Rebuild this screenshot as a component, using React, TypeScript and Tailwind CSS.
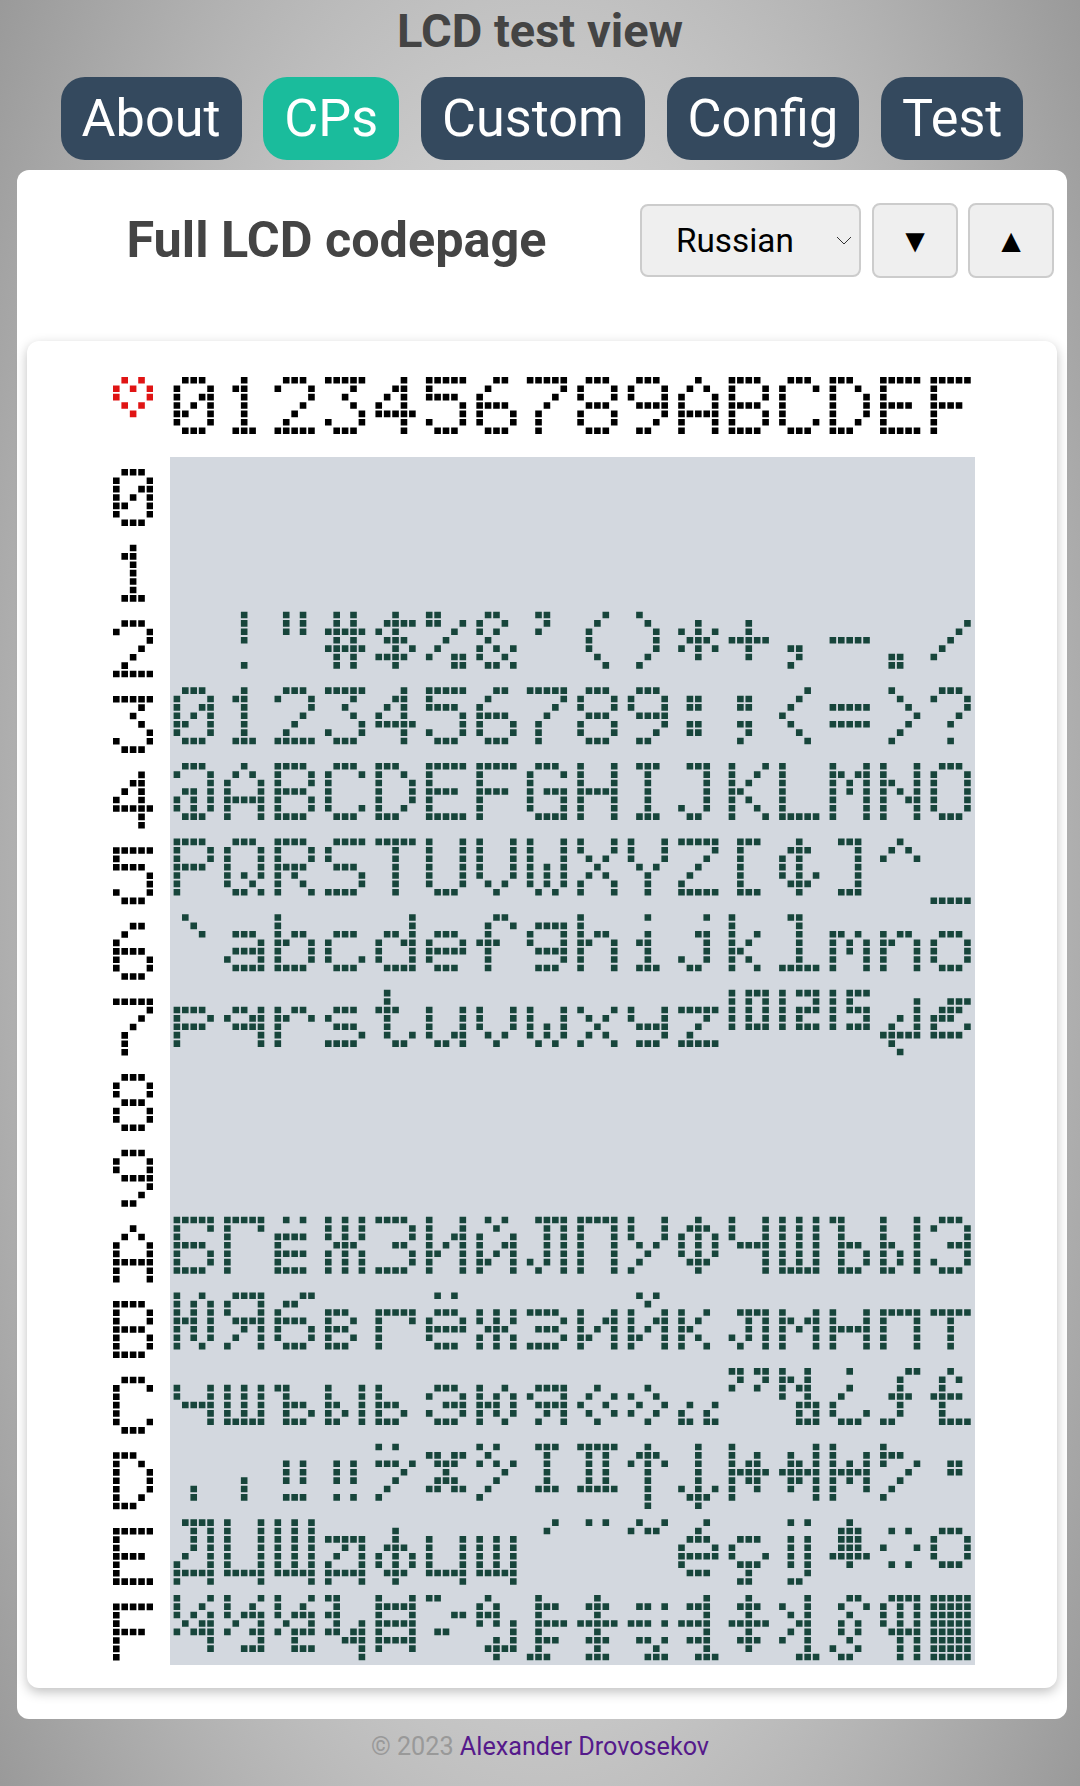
const PITCH = 8.41;
const ROW_PITCH = 8.404;
const DOT = 6.6;

// 5x8 character ROM, two hex digits per pixel row, rows left out are empty
const ROM: Record<number, string[]> = {
  0x2: ["", "04040404000004", "0a0a0a", "0a0a1f0a1f0a0a", "040f140e051e04", "18190204081303", "0c12140815120d", "0c0408", "02040808080402", "08040202020408", "0004150e150400", "0004041f040400", "000000000c0408", "0000001f", "00000000000c0c", "000102040810"],
  0x3: ["0e11131519110e", "040c040404040e", "0e11010204081f", "1f02040201110e", "02060a121f0202", "1f101e0101110e", "0608101e11110e", "1f010204080808", "0e11110e11110e", "0e11110f01020c", "000c0c000c0c", "000c0c000c0408", "02040810080402", "00001f001f", "08040201020408", "0e110102040004"],
  0x4: ["0e11010d15150e", "040a11111f1111", "1e11111e11111e", "0e11101010110e", "1c12111111121c", "1f10101e10101f", "1f10101e101010", "0e11101711110f", "1111111f111111", "0e04040404040e", "0e02020202120c", "11121418141211", "1010101010101f", "111b1515111111", "11111915131111", "0e11111111110e"],
  0x5: ["1e11111e101010", "0e11111115120d", "1e11111e141211", "0f10100e01011e", "1f040404040404", "1111111111110e", "11111111110a04", "1111111515150a", "11110a040a1111", "1111110a040404", "1f01020408101f", "0e08080808080e", "040e1414150e04", "0e02020202020e", "040a11", "000000000000001f"],
  0x6: ["08040200000000", "00000e010f110f", "1010161911111e", "00000e1010110e", "01010d1311110f", "00000e111f100e", "0609081c080808", "000f11110f010e", "10101619111111", "0400040c04040e", "0200060202120c", "10101214181412", "0c04040404041f", "00001a15151111", "00001619111111", "00000e1111110e"],
  0x7: ["00001e111e1010", "00000d130f0101", "00001619101010", "00000e100e011e", "08081c08080906", "0000111111130d", "00001111110a04", "0000111115150a", "0000110a040a11", "000011110f010e", "00001f0204081f", "1715151517", "1711171417", "1714171117", "00010105091f0804", "00070e1c111e"],
  0xa: ["1f11101e11111e", "1f111010101010", "0a001e101e101e", "1515150e151515", "1e01010601011e", "11111315191111", "0a041113151911", "0f050505051509", "1f111111111111", "1111110a040810", "040e1515150e04", "1111110f010101", "1515151515151f", "1808080e09090e", "11111119151519", "0e11010701110e"],
  0xb: ["1215151d151512", "0f11110f050911", "030c101e11110e", "00001c121c121c", "00001f11101010", "0a000e111f100e", "000015150e1515", "00001e010e011e", "00001113151911", "0a041113151911", "00001214181412", "00000f05051509", "0000111b151111", "000011111f1111", "00001f11111111", "00001f04040404"],
  0xc: ["000011110f0101", "0000151515151f", "000018080e090e", "00001111191519", "000010101c121c", "00000e1107110e", "000012151d1512", "00000f110f0509", "00000409120904", "00000412091204", "0000000009121b", "1b0912", "121a1612070507", "0400040810110e", "0304040e040418", "040a081e08080f"],
  0xd: ["00000000000404", "00000000040404", "00000a0a0a000e", "00000a0a0a000a", "14001d02040810", "001b0e040e1b", "14081502040810", "0e040404040e", "1f0a0a0a0a1f", "040e150404040404", "0404040404150e04", "1012161f161210", "01090d1f0d0901", "1011151f151110", "101c1102040810", "00000606"],
  0xe: ["0f05050509111f11", "1111111111111f01", "1515151515151f01", "00001f0509111f11", "0004040e15150e04", "0000111111111f01", "0000151515151f01", "0204", "0a", "0916", "02040e111f100e", "00000e10110e040c", "0a000a0a0a0a020c", "040e0e0e1f04", "000a0011000a", "000e1111110e"],
  0xf: ["1112150b170101", "11121709130107", "11121709170407", "180818091b070101", "111f111f111f11", "180003000c", "08141c1501050f04", "080e080f080e081c", "040e041f040e040e", "000d001d000d0207", "020e021e020e0207", "040e041f040e04", "02120a060a120207", "0609040a0a04120c", "0f1515150f050505", "1f1f1f1f1f1f1f1f"],
};

const LABELS = [0, 1, 2, 3, 4, 5, 6, 7, 8, 9, 0xa, 0xb, 0xc, 0xd, 0xe, 0xf];
const HEX_CODES = LABELS.map((n) => (n < 10 ? 0x30 + n : 0x41 + n - 10));
const HEART = [0x0a, 0x15, 0x11, 0x0a, 0x04];

function glyphRows(code: number) {
  const data = ROM[code >> 4]?.[code & 15] ?? "";
  return (data.match(/../g) ?? []).map((h) => parseInt(h, 16));
}

function dots(rows: number[], col: number, row: number, x0: number, y0: number) {
  const out: { x: number; y: number }[] = [];
  rows.forEach((bits, r) => {
    for (let c = 0; c < 5; c++) {
      if (bits & (16 >> c)) {
        out.push({ x: x0 + (col * 6 + c) * PITCH, y: y0 + (row * 9 + r) * ROW_PITCH });
      }
    }
  });
  return out;
}

function Dots({ list, color, w, h }: { list: { x: number; y: number }[]; color: string; w: number; h: number }) {
  return (
    <svg width={w} height={h} viewBox={`0 0 ${w} ${h}`} className="block shrink-0">
      <path fill={color} d={list.map((d) => `M${d.x.toFixed(2)} ${d.y.toFixed(2)}h${DOT}v${DOT}h-${DOT}z`).join("")} />
    </svg>
  );
}

function CodepageGrid() {
  const list = LABELS.flatMap((row) =>
    LABELS.flatMap((col) => dots(glyphRows((row << 4) | col), col, row, 3.6, 3.4))
  );
  return <Dots list={list} color="#17453b" w={805} h={1208} />;
}

function Matrix() {
  const head = HEX_CODES.flatMap((code, i) => dots(glyphRows(code), i, 0, 3.6, 0));
  const side = HEX_CODES.flatMap((code, i) => dots(glyphRows(code), 0, i, 0, 12));
  const heart = dots(HEART, 0, 0, 0, 0);

  return (
    <div className="mb-[31px] rounded-xl bg-white pl-[86px] pt-[36px] pb-[23px] shadow-[0_4px_12px_rgba(0,0,0,0.25)]">
      <div className="flex gap-[17px]">
        <Dots list={heart} color="#e01414" w={40} h={80} />
        <Dots list={head} color="#000000" w={805} h={80} />
      </div>
      <div className="flex gap-[17px]">
        <Dots list={side} color="#000000" w={40} h={1208} />
        <div className="bg-[#d3d8df]">
          <CodepageGrid />
        </div>
      </div>
    </div>
  );
}

const tabs = ["About", "CPs", "Custom", "Config", "Test"];

export default function App() {
  return (
    <div className="flex h-[1786px] flex-col items-center bg-[radial-gradient(680px_1500px_at_center,#fdfdfd,#999999)] font-['Roboto',sans-serif]">
      <h1 className="flex h-[60px] items-center text-[47px] font-bold leading-none text-[#444]">LCD test view</h1>
      <nav className="mt-[17px] ml-[4px] flex gap-[21.8px]">
        {tabs.map((t) => (
          <a
            key={t}
            className={`flex h-[83px] items-center rounded-[24px] px-[21px] pt-[2px] text-[52.2px] leading-none text-white ${t === "CPs" ? "bg-[#1abc9c]" : "bg-[#34495e]"}`}
          >
            {t}
          </a>
        ))}
      </nav>

      <main className="mt-[10px] ml-[17px] w-[1050px] self-start rounded-xl bg-white px-[10px]">
        <div className="flex h-[171px] items-start pt-[33px] pr-[3px]">
          <h2 className="flex-1 pl-[6px] pt-[8px] text-center text-[50.4px] font-bold leading-[58px] text-[#444]">
            Full LCD codepage
          </h2>
          <div className="relative mt-px">
            <select className="block h-[73px] w-[221px] appearance-none rounded-lg border-2 border-[#ccc] bg-[#efefef] pl-[34px] text-[33.3px] text-black">
              <option>Russian</option>
            </select>
            <svg width="16" height="9" viewBox="0 0 16 9" className="absolute right-[9px] top-[32px]">
              <path d="M1 1l7 7 7-7" fill="none" stroke="#333" strokeWidth="1" />
            </svg>
          </div>
          <button className="ml-[11px] h-[75px] w-[86px] rounded-lg border-2 border-[#ccc] bg-[#efefef] text-[33px] text-black">▼</button>
          <button className="ml-[10px] h-[75px] w-[86px] rounded-lg border-2 border-[#ccc] bg-[#efefef] text-[33px] text-black">▲</button>
        </div>
        <Matrix />
      </main>

      <footer className="mt-[14px] text-[25.2px] leading-[28px] text-[#999]">
        © 2023 <a className="text-[#551a8b]">Alexander Drovosekov</a>
      </footer>
    </div>
  );
}
